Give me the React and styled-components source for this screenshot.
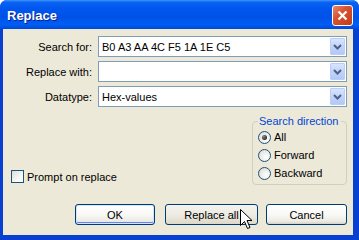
import styled, { createGlobalStyle, css } from 'styled-components';

const GlobalStyle = createGlobalStyle`
  html, body {
    margin: 0;
    padding: 0;
    background: #ffffff;
  }
  body {
    font-family: "Liberation Sans", Arial, sans-serif;
    font-size: 11px;
    color: #000000;
  }
`;

const Window = styled.div`
  width: 359px;
  height: 240px;
  box-sizing: border-box;
  display: flex;
  flex-direction: column;
  background: #0841d2;
  border-radius: 7px 7px 0 0;
  overflow: hidden;
`;

const TitleBar = styled.div`
  height: 29px;
  flex: 0 0 29px;
  display: flex;
  align-items: center;
  justify-content: space-between;
  padding: 0 6px 0 7px;
  background: linear-gradient(
    180deg,
    #3d95ff 0%,
    #0a62f2 8%,
    #0056ee 30%,
    #0052e6 60%,
    #005ef4 85%,
    #0048d6 100%
  );
`;

const Title = styled.span`
  font-family: "Liberation Sans", Arial, sans-serif;
  font-weight: bold;
  font-size: 13px;
  color: #ffffff;
  text-shadow: 1px 1px 0 #0a1e8c;
  margin-top: 1px;
`;

const CloseButton = styled.div`
  width: 19px;
  height: 19px;
  border: 1px solid #ffffff;
  border-radius: 3px;
  background: linear-gradient(135deg, #e98a6e 0%, #d8522f 40%, #c43a17 100%);
  display: flex;
  align-items: center;
  justify-content: center;
  margin-top: 1px;
`;

const Client = styled.div`
  flex: 1;
  margin: 0 6px 5px 3px;
  background: #ece9d8;
  padding: 7px 6px 0 8px;
  display: flex;
  flex-direction: column;
`;

const FormGrid = styled.div`
  display: grid;
  grid-template-columns: 81px 1fr;
  grid-auto-rows: 21px;
  column-gap: 6px;
  row-gap: 4px;
  align-items: center;
`;

const Label = styled.label`
  text-align: right;
  white-space: nowrap;
`;

const Combo = styled.div`
  height: 21px;
  box-sizing: border-box;
  border: 1px solid #7f9db9;
  background: #ffffff;
  display: flex;
  align-items: center;
  padding: 0 1px 0 3px;
`;

const ComboText = styled.span`
  flex: 1;
  white-space: nowrap;
  overflow: hidden;
`;

const ArrowButton = styled.div`
  width: 15px;
  height: 17px;
  border-radius: 1px;
  background: linear-gradient(180deg, #d9e5fd 0%, #c1d3fb 50%, #b4c8f6 100%);
  border: 1px solid #b9cdf8;
  box-sizing: border-box;
  display: flex;
  align-items: center;
  justify-content: center;
`;

const MiddleRow = styled.div`
  display: flex;
  justify-content: space-between;
  align-items: flex-end;
  margin-top: 8px;
`;

const CheckRow = styled.label`
  display: flex;
  align-items: center;
  gap: 3px;
  margin: 0 0 2px 0;
`;

const CheckBox = styled.span`
  width: 13px;
  height: 13px;
  box-sizing: border-box;
  border: 1px solid #1c5180;
  background: linear-gradient(135deg, #dcdcd7 0%, #ffffff 80%);
`;

const GroupBox = styled.fieldset`
  width: 95px;
  box-sizing: border-box;
  margin: 0;
  padding: 0 4px 2px 5px;
  border: 1px solid #d0d0bf;
  border-radius: 4px;
  min-width: 0;
`;

const Legend = styled.legend`
  color: #0046d5;
  padding: 0 2px 0 1px;
  line-height: 13px;
`;

const RadioRow = styled.label`
  height: 18px;
  display: flex;
  align-items: center;
  gap: 3px;
`;

const RadioCircle = styled.span`
  width: 13px;
  height: 13px;
  box-sizing: border-box;
  border-radius: 50%;
  border: 1px solid #1c5180;
  background: radial-gradient(circle at 65% 65%, #ffffff 0%, #e8e8e2 60%, #d4d4cc 100%);
  display: flex;
  align-items: center;
  justify-content: center;
  ${(p) =>
    p.$checked &&
    css`
      &::after {
        content: '';
        width: 5px;
        height: 5px;
        border-radius: 50%;
        background: radial-gradient(circle at 35% 35%, #8a8a8a 0%, #2a2a2a 70%);
      }
    `}
`;

const ButtonRow = styled.div`
  display: flex;
  justify-content: flex-end;
  margin-top: 19px;
`;

const Button = styled.div`
  position: relative;
  width: ${(p) => p.$width}px;
  margin-left: ${(p) => p.$gap || 0}px;
  height: 21px;
  box-sizing: border-box;
  border: 1px solid #003c74;
  border-radius: 3px;
  display: flex;
  align-items: center;
  justify-content: center;
  background: linear-gradient(180deg, #ffffff 0%, #f8f8f5 50%, #ecebe5 85%, #d6d0c5 100%);
  ${(p) =>
    p.$default &&
    css`
      box-shadow: inset 0 0 0 1px #cee7ff, inset 0 -1px 0 1px #6982ee;
    `}
  ${(p) =>
    p.$hot &&
    css`
      background: linear-gradient(180deg, #f4f3ee 0%, #ebe9df 60%, #dcd8c8 100%);
    `}
`;

const Cursor = styled.svg`
  position: absolute;
  left: 74px;
  top: 4px;
`;

const Chevron = () => (
  <svg width="9" height="6" viewBox="0 0 9 6">
    <path d="M1 1 L4.5 4.5 L8 1" fill="none" stroke="#4d6185" strokeWidth="2" />
  </svg>
);

const ComboBox = ({ value }) => (
  <Combo>
    <ComboText>{value}</ComboText>
    <ArrowButton>
      <Chevron />
    </ArrowButton>
  </Combo>
);

const Radio = ({ label, checked }) => (
  <RadioRow>
    <RadioCircle $checked={checked} />
    {label}
  </RadioRow>
);

const App = () => (
  <>
    <GlobalStyle />
    <Window>
      <TitleBar>
        <Title>Replace</Title>
        <CloseButton>
          <svg width="11" height="11" viewBox="0 0 11 11">
            <path d="M1.5 1.5 L9.5 9.5 M9.5 1.5 L1.5 9.5" stroke="#ffffff" strokeWidth="2.2" />
          </svg>
        </CloseButton>
      </TitleBar>
      <Client>
        <FormGrid>
          <Label>Search for:</Label>
          <ComboBox value="B0 A3 AA 4C F5 1A 1E C5" />
          <Label>Replace with:</Label>
          <ComboBox value="" />
          <Label>Datatype:</Label>
          <ComboBox value="Hex-values" />
        </FormGrid>
        <MiddleRow>
          <CheckRow>
            <CheckBox />
            Prompt on replace
          </CheckRow>
          <GroupBox>
            <Legend>Search direction</Legend>
            <Radio label="All" checked />
            <Radio label="Forward" />
            <Radio label="Backward" />
          </GroupBox>
        </MiddleRow>
        <ButtonRow>
          <Button $width={80} $default>OK</Button>
          <Button $width={93} $gap={10} $hot>
            Replace all
            <Cursor width="13" height="21" viewBox="0 0 13 21">
              <path
                d="M0.5 0.5 L0.5 16.5 L4.5 12.5 L7.5 19.5 L10 18.5 L7 11.5 L12 11.5 Z"
                fill="#ffffff"
                stroke="#000000"
                strokeWidth="1"
              />
            </Cursor>
          </Button>
          <Button $width={81} $gap={8}>Cancel</Button>
        </ButtonRow>
      </Client>
    </Window>
  </>
);

export default App;
